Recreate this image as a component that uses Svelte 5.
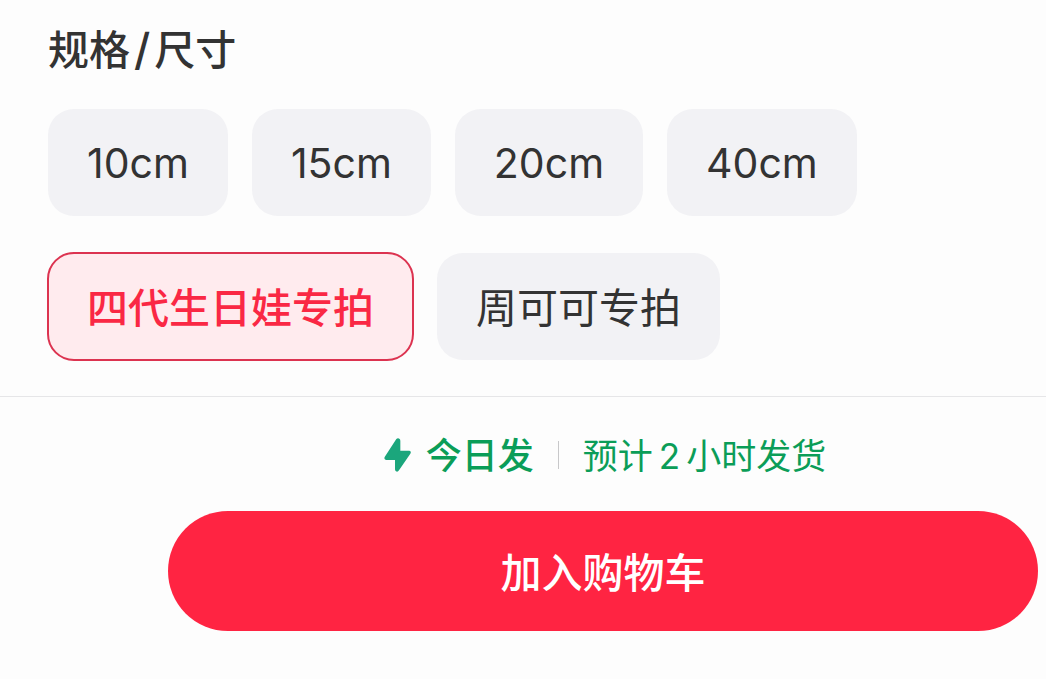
<script>
  const rows = [
    ['10cm', '15cm', '20cm', '40cm'],
    ['四代生日娃专拍', '周可可专拍'],
  ];
  let selected = $state('四代生日娃专拍');
</script>

<main>
  <section class="spec">
    <h2>规格<span class="slash">/</span>尺寸</h2>
    {#each rows as row, i}
      <div class="row">
        {#each row as option}
          <button
            type="button"
            class="chip"
            class:latin={i === 0}
            class:selected={selected === option}
            aria-pressed={selected === option}
            onclick={() => (selected = option)}>{option}</button>
        {/each}
      </div>
    {/each}
  </section>
  <footer>
    <div class="delivery">
      <svg width="27" height="34" viewBox="0 0 81 102" aria-hidden="true">
        <path d="M37 3 Q42 -1 47 3 Q49 5 49 9 V38 H76 Q83 40 79 47 L45 97 Q41 103 36 100 Q33 98 33 94 V66 H6 Q-1 64 2 57Z" fill="#1ba67c" />
      </svg>
      <strong>今日发</strong>
      <span class="divider"></span>
      <span class="eta">预计<span class="hours">2</span>小时发货</span>
    </div>
    <button type="button" class="cart">加入购物车</button>
  </footer>
</main>

<style>
  :global(body) {
    margin: 0;
    background: #fdfdfd;
  }
  main {
    font-family: Inter, "Noto Sans CJK SC", sans-serif;
    color: #333;
  }
  button {
    font-family: inherit;
    cursor: pointer;
  }
  .spec {
    padding: 20px 48px 36px;
    border-bottom: 1px solid #e6e6e8;
  }
  h2 {
    margin: 0 0 29px;
    font-size: 41px;
    line-height: 60px;
    font-weight: 500;
  }
  .slash {
    padding: 0 4px;
    font-size: 44px;
    line-height: 1;
  }
  .row {
    display: flex;
    flex-wrap: wrap;
    gap: 24px;
  }
  .row + .row {
    margin-top: 37px;
  }
  .chip {
    height: 107px;
    padding: 0 39px 3px;
    border: 0;
    border-radius: 26px;
    background: #f2f2f5;
    color: #333;
    font-size: 41px;
  }
  .chip.latin {
    padding-bottom: 0;
  }
  .chip.selected {
    outline: 2px solid #dc3350;
    outline-offset: -1px;
    background: #ffebee;
    color: #fa2844;
    font-weight: 500;
  }
  footer {
    padding: 32px 8px 48px 168px;
  }
  .delivery {
    display: flex;
    align-items: center;
    justify-content: center;
    height: 52px;
    padding-left: 4px;
    color: #0b9d58;
    font-size: 35px;
  }
  strong {
    margin-left: 15px;
    padding-bottom: 4px;
    font-size: 36px;
    font-weight: 500;
  }
  .divider {
    width: 1px;
    height: 28px;
    margin: 0 24px;
    background: #c8c8ca;
  }
  .eta {
    padding-bottom: 4px;
  }
  .hours {
    padding: 0 6px;
  }
  .cart {
    display: block;
    width: 100%;
    height: 120px;
    margin-top: 30px;
    padding: 0 0 3px;
    border: 0;
    border-radius: 60px;
    background: #ff2442;
    color: #fff;
    font-size: 41px;
    font-weight: 500;
  }
</style>
